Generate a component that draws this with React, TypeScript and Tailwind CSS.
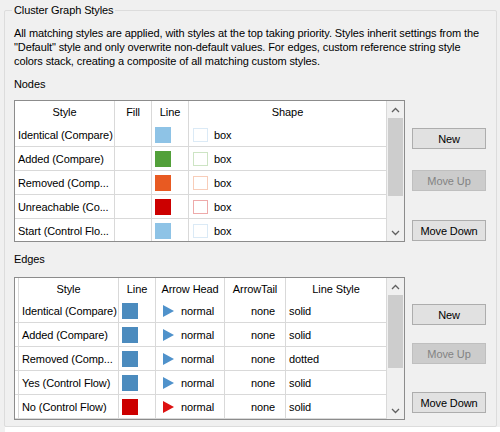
import React from "react";

const nodes = [
  { name: "Identical (Compare)", line: "#8ec3e6", box: "#dbeaf6" },
  { name: "Added (Compare)", line: "#52a03a", box: "#cde4c4" },
  { name: "Removed (Comp...", line: "#e85a22", box: "#f8cdb9" },
  { name: "Unreachable (Co...", line: "#cc0000", box: "#eeaaaa" },
  { name: "Start (Control Flo...", line: "#8ec3e6", box: "#dbeaf6" },
];

const edges = [
  { name: "Identical (Compare)", line: "#4b8bbe", arrow: "#4f92cb", style: "solid" },
  { name: "Added (Compare)", line: "#4b8bbe", arrow: "#4f92cb", style: "solid" },
  { name: "Removed (Comp...", line: "#4b8bbe", arrow: "#4f92cb", style: "dotted" },
  { name: "Yes (Control Flow)", line: "#4b8bbe", arrow: "#4f92cb", style: "solid" },
  { name: "No (Control Flow)", line: "#cc0000", arrow: "#dd1111", style: "solid" },
];

function ScrollBar({ thumbTop, thumbHeight }: { thumbTop: number; thumbHeight: number }) {
  return (
    <div className="w-[17px] shrink-0 flex flex-col bg-[#f0f0f0] h-full">
      <div className="h-[17px] flex items-center justify-center shrink-0">
        <svg width="9" height="6" viewBox="0 0 9 6">
          <path d="M1 5 L4.5 1.5 L8 5" fill="none" stroke="#606060" strokeWidth="1.3" />
        </svg>
      </div>
      <div className="flex-1 relative">
        <div
          className="absolute left-[1px] w-[15px] bg-[#cdcdcd]"
          style={{ top: thumbTop, height: thumbHeight }}
        />
      </div>
      <div className="h-[17px] flex items-center justify-center shrink-0">
        <svg width="9" height="6" viewBox="0 0 9 6">
          <path d="M1 1 L4.5 4.5 L8 1" fill="none" stroke="#606060" strokeWidth="1.3" />
        </svg>
      </div>
    </div>
  );
}

function Btn({ label, disabled }: { label: string; disabled?: boolean }) {
  return (
    <div
      className={
        disabled
          ? "w-[74px] h-[21px] border border-[#bfbfbf] bg-[#cccccc] text-[#838383] flex items-center justify-center"
          : "w-[74px] h-[21px] border border-[#adadad] bg-[#e1e1e1] text-black flex items-center justify-center"
      }
    >
      {label}
    </div>
  );
}

function NodesTable() {
  return (
    <div className="w-[391px] h-[142px] border border-[#8c8c8c] bg-white flex overflow-hidden">
      <div className="flex flex-col w-[372px] overflow-hidden">
        <div className="flex h-[22px] shrink-0">
          <div className="w-[100px] border-r border-[#d9d9d9] flex items-center justify-center">Style</div>
          <div className="w-[37px] border-r border-[#d9d9d9] flex items-center justify-center">Fill</div>
          <div className="w-[37px] border-r border-[#d9d9d9] flex items-center justify-center">Line</div>
          <div className="w-[198px] border-r border-[#d9d9d9] flex items-center justify-center">Shape</div>
        </div>
        {nodes.map((n) => (
          <div key={n.name} className="flex h-[24px] shrink-0 border-b border-[#d9d9d9]">
            <div className="w-[100px] border-r border-[#d9d9d9] flex items-center pl-[3px] whitespace-nowrap overflow-hidden">
              {n.name}
            </div>
            <div className="w-[37px] border-r border-[#d9d9d9]" />
            <div className="w-[37px] border-r border-[#d9d9d9] flex items-center pl-[3px]">
              <div className="w-[16px] h-[16px]" style={{ backgroundColor: n.line }} />
            </div>
            <div className="w-[198px] border-r border-[#d9d9d9] flex items-center pl-[4px] gap-[6px]">
              <div className="w-[15px] h-[14px] border bg-white" style={{ borderColor: n.box }} />
              <span>box</span>
            </div>
          </div>
        ))}
      </div>
      <ScrollBar thumbTop={0} thumbHeight={78} />
    </div>
  );
}

function Triangle({ color }: { color: string }) {
  return (
    <svg width="11" height="12" viewBox="0 0 11 12">
      <polygon points="0,0 11,6 0,12" fill={color} />
    </svg>
  );
}

function EdgesTable() {
  return (
    <div className="w-[391px] h-[143px] border border-[#8c8c8c] bg-white flex overflow-hidden">
      <div className="flex flex-col w-[372px] overflow-hidden">
        <div className="flex h-[21px] shrink-0">
          <div className="w-[4px] border-r border-[#d9d9d9]" />
          <div className="w-[100px] border-r border-[#d9d9d9] flex items-center justify-center">Style</div>
          <div className="w-[37px] border-r border-[#d9d9d9] flex items-center justify-center">Line</div>
          <div className="w-[69px] border-r border-[#d9d9d9] flex items-center justify-center">Arrow Head</div>
          <div className="w-[61px] border-r border-[#d9d9d9] flex items-center justify-center">ArrowTail</div>
          <div className="w-[101px] border-r border-[#d9d9d9] flex items-center justify-center">Line Style</div>
        </div>
        {edges.map((e) => (
          <div key={e.name} className="flex h-[24px] shrink-0 border-b border-[#d9d9d9]">
            <div className="w-[4px] border-r border-[#d9d9d9]" />
            <div className="w-[100px] border-r border-[#d9d9d9] flex items-center pl-[3px] whitespace-nowrap overflow-hidden">
              {e.name}
            </div>
            <div className="w-[37px] border-r border-[#d9d9d9] flex items-center pl-[3px]">
              <div className="w-[16px] h-[16px]" style={{ backgroundColor: e.line }} />
            </div>
            <div className="w-[69px] border-r border-[#d9d9d9] flex items-center pl-[7px] gap-[7px]">
              <Triangle color={e.arrow} />
              <span>normal</span>
            </div>
            <div className="w-[61px] border-r border-[#d9d9d9] flex items-center justify-end pr-[10px]">none</div>
            <div className="w-[101px] border-r border-[#d9d9d9] flex items-center pl-[3px]">{e.style}</div>
          </div>
        ))}
      </div>
      <ScrollBar thumbTop={0} thumbHeight={73} />
    </div>
  );
}

export default function App() {
  return (
    <div className="w-[500px] h-[432px] bg-[#f0f0f0] flex flex-col font-['Liberation_Sans',Arial,sans-serif] text-[11px] leading-[14px] text-black tracking-[-0.1px] overflow-hidden">
      <div className="relative mt-[10px] ml-[4px] w-[493px] h-[417px] border border-[#dcdcdc] rounded-[2px] pt-[15px] pl-[9px] flex flex-col shrink-0">
        <span className="absolute left-[7px] top-[-8px] px-[2px] bg-[#f0f0f0]">Cluster Graph Styles</span>
        <p className="whitespace-nowrap">
          All matching styles are applied, with styles at the top taking priority. Styles inherit settings from the
          <br />
          "Default" style and only overwrite non-default values. For edges, custom reference string style
          <br />
          colors stack, creating a composite of all matching custom styles.
        </p>
        <div className="mt-[9px]">Nodes</div>
        <div className="mt-[9px] flex">
          <NodesTable />
          <div className="ml-[7px] flex flex-col pt-[28px]">
            <Btn label="New" />
            <div className="mt-[21px]">
              <Btn label="Move Up" disabled />
            </div>
            <div className="mt-[29px]">
              <Btn label="Move Down" />
            </div>
          </div>
        </div>
        <div className="mt-[10px]">Edges</div>
        <div className="mt-[11px] flex">
          <EdgesTable />
          <div className="ml-[7px] flex flex-col pt-[27px]">
            <Btn label="New" />
            <div className="mt-[18px]">
              <Btn label="Move Up" disabled />
            </div>
            <div className="mt-[28px]">
              <Btn label="Move Down" />
            </div>
          </div>
        </div>
      </div>
      <div className="ml-[5px] h-[6px] bg-white" />
    </div>
  );
}
